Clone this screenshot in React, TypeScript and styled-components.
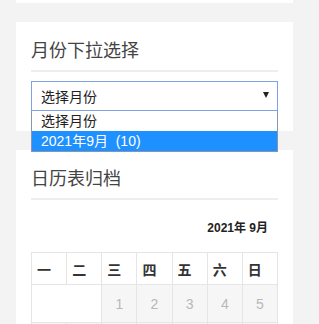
import { FC } from "react";
import styled, { createGlobalStyle } from "styled-components";

const GlobalStyle = createGlobalStyle`
    html, body {
        margin: 0;
        padding: 0;
        overflow: hidden;
        background: #f3f3f3;
        font-family: "Liberation Sans", "Noto Sans CJK SC", sans-serif;
        color: #333;
    }
`;

const weekDays = ["一", "二", "三", "四", "五", "六", "日"];

// 2021年9月, 周一开始, 1号是周三
const weeks: (number | null)[][] = [
    [null, null, 1, 2, 3, 4, 5],
    [6, 7, 8, 9, 10, 11, 12],
    [13, 14, 15, 16, 17, 18, 19],
    [20, 21, 22, 23, 24, 25, 26],
    [27, 28, 29, 30, null, null, null],
];

const App: FC = () => {
    return <Page>
        <GlobalStyle />
        <PrevCard />
        <Card>
            <Title>月份下拉选择</Title>
            <SelectWrap>
                <SelectBox>
                    <span>选择月份</span>
                    <Arrow />
                </SelectBox>
                <DropList>
                    <Option>选择月份</Option>
                    <Option active>2021年9月 &nbsp;(10)</Option>
                </DropList>
            </SelectWrap>
        </Card>
        <Card>
            <Title>日历表归档</Title>
            <Caption>2021年 9月</Caption>
            <Calendar>
                <thead>
                    <tr>
                        {weekDays.map(d => <Th key={d}>{d}</Th>)}
                    </tr>
                </thead>
                <tbody>
                    {weeks.map((week, i) => {
                        const lead = week.findIndex(d => d !== null);
                        const days = week.filter(d => d !== null) as number[];
                        const tail = 7 - lead - days.length;
                        return <tr key={i}>
                            {lead > 0 && <Pad colSpan={lead} />}
                            {days.map(d => <Day key={d}>{d}</Day>)}
                            {tail > 0 && <Pad colSpan={tail} />}
                        </tr>
                    })}
                </tbody>
            </Calendar>
        </Card>
    </Page>
}

const Page = styled.div`
    display: flex;
    flex-direction: column;
    gap: 19px;
    padding-left: 16px;
`

const PrevCard = styled.div`
    width: 277px;
    height: 3px;
    background: #fff;
`

const Card = styled.div`
    width: 277px;
    box-sizing: border-box;
    padding: 15px;
    background: #fff;
`

const Title = styled.h3`
    margin: 0;
    padding-bottom: 5px;
    border-bottom: 2px solid #eee;
    font-size: 18px;
    line-height: 28px;
    font-weight: normal;
    color: #444;
`

const SelectWrap = styled.div`
    position: relative;
    margin: 9px 0 5px;
`

const SelectBox = styled.div`
    height: 30px;
    box-sizing: border-box;
    border: 1px solid #7fa2e6;
    padding: 0 8px 0 9px;
    display: flex;
    align-items: center;
    justify-content: space-between;
    font-size: 14px;
    color: #222;
`

const Arrow = styled.span`
    width: 0;
    height: 0;
    border-left: 3px solid transparent;
    border-right: 3px solid transparent;
    border-top: 6px solid #222;
    margin-top: -2px;
`

const DropList = styled.div`
    position: absolute;
    top: 100%;
    left: 0;
    right: 0;
    border: 1px solid #8995ad;
    border-top: none;
    background: #fff;
    z-index: 10;
`

const Option = styled.div<{ active?: boolean }>`
    height: 20px;
    line-height: 20px;
    padding-left: 9px;
    font-size: 14px;
    color: ${props => props.active ? "#fff" : "#222"};
    background: ${props => props.active ? "#1e90ff" : "#fff"};
`

const Caption = styled.div`
    padding: 18px 10px 14px;
    line-height: 20px;
    text-align: right;
    font-size: 12px;
    font-weight: bold;
    color: #222;
`

const Calendar = styled.table`
    width: 100%;
    table-layout: fixed;
    border-collapse: collapse;
`

const Th = styled.th`
    height: 31px;
    padding: 0 5px;
    border: 1px solid #e5e5e5;
    text-align: left;
    font-size: 14px;
    font-weight: bold;
    color: #333;
`

const Day = styled.td`
    height: 37px;
    padding: 0;
    border: 1px solid #e5e5e5;
    background: #f6f6f6;
    text-align: center;
    font-size: 14px;
    color: #b8b8b8;
`

const Pad = styled.td`
    border: 1px solid #e5e5e5;
    background: #fff;
`

export default App;
